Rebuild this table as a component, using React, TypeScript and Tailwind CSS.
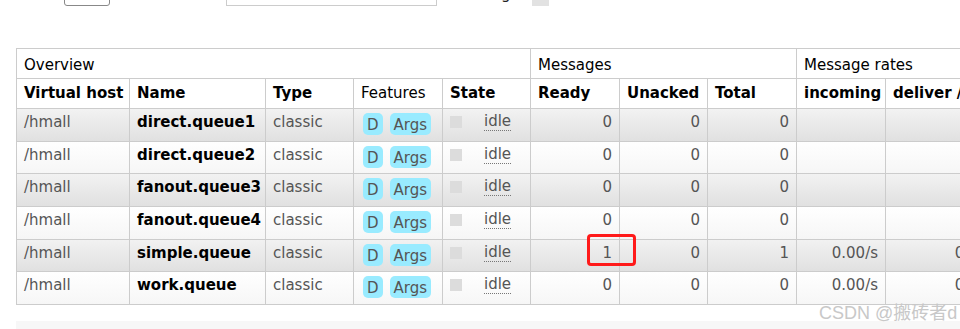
import React from 'react';

type Queue = {
  vhost: string;
  name: string;
  ready: number;
  unacked: number;
  total: number;
  incoming?: string;
  deliver?: string;
};

const queues: Queue[] = [
  { vhost: '/hmall', name: 'direct.queue1', ready: 0, unacked: 0, total: 0 },
  { vhost: '/hmall', name: 'direct.queue2', ready: 0, unacked: 0, total: 0 },
  { vhost: '/hmall', name: 'fanout.queue3', ready: 0, unacked: 0, total: 0 },
  { vhost: '/hmall', name: 'fanout.queue4', ready: 0, unacked: 0, total: 0 },
  { vhost: '/hmall', name: 'simple.queue', ready: 1, unacked: 0, total: 1, incoming: '0.00/s', deliver: '0.00/s' },
  { vhost: '/hmall', name: 'work.queue', ready: 0, unacked: 0, total: 0, incoming: '0.00/s', deliver: '0.00/s' },
];

const colWidths = [113, 136, 88, 89, 88, 89, 88, 89, 89, 123, 90];

// fragments of the pagination/filter bar, cut off by the top edge
const TopBar = () => (
  <div className="h-[6px] overflow-hidden flex items-end text-[15px] text-[#222]">
    <div className="ml-[64px] w-[46px] h-[24px] border border-[#888] rounded-[3px] bg-white shrink-0" />
    <div className="ml-[116px] w-[211px] h-[24px] border border-[#ccc] bg-white shrink-0" />
    <div className="ml-[45px] leading-[18px] mb-[3px] shrink-0">Regex</div>
    <div className="ml-[4px] w-[17px] h-[20px] bg-[#e2e2e2] shrink-0" />
  </div>
);

const Badge = ({ children }: { children: React.ReactNode }) => (
  <span className="inline-block bg-[#99ebff] text-[#555] rounded-[5px] px-[4px] pt-[3px] pb-[1px] leading-[18px]">
    {children}
  </span>
);

export default function App() {
  const th = 'border border-[#ccc] text-left font-bold text-black px-[7px] h-[30px] align-middle whitespace-nowrap overflow-hidden';
  const group = th + ' font-normal text-[#222] pt-[3px]';
  const td = 'border border-[#ccc] px-[7px] pt-[4px] pb-[5.67px] align-top leading-[18px] text-[#555] whitespace-nowrap';
  const num = td + ' text-right';

  return (
    <div className="relative w-[960px] h-[329px] overflow-hidden bg-white font-['DejaVu_Sans',Verdana,sans-serif] text-[15px]">
      <TopBar />

      <div className="mt-[42px] ml-[16px]">
        <table className="table-fixed border-collapse w-[1082px]">
          <colgroup>
            {colWidths.map((w, i) => (
              <col key={i} style={{ width: w }} />
            ))}
          </colgroup>
          <thead>
            <tr>
              <th colSpan={5} className={group}>Overview</th>
              <th colSpan={3} className={group}>Messages</th>
              <th colSpan={3} className={group}>Message rates</th>
            </tr>
            <tr>
              <th className={th}>Virtual host</th>
              <th className={th}>Name</th>
              <th className={th}>Type</th>
              <th className={th + ' font-normal text-[#222]'}>Features</th>
              <th className={th}>State</th>
              <th className={th}>Ready</th>
              <th className={th}>Unacked</th>
              <th className={th}>Total</th>
              <th className={th}>incoming</th>
              <th className={th}>deliver / get</th>
              <th className={th}>ack</th>
            </tr>
          </thead>
          <tbody>
            {queues.map((q, i) => {
              const rowBg =
                i % 2 === 0
                  ? 'bg-gradient-to-b from-[#f2f2f2] to-[#e0e0e0]'
                  : 'bg-gradient-to-b from-[#ffffff] to-[#f6f6f6]';
              return (
                <tr key={q.name} className={rowBg}>
                  <td className={td}>{q.vhost}</td>
                  <td className={td + ' font-bold text-black'}>{q.name}</td>
                  <td className={td}>classic</td>
                  <td className={td + ' pl-[9px] pt-[2px]'}>
                    <div className="flex gap-[7px]">
                      <Badge>D</Badge>
                      <Badge>Args</Badge>
                    </div>
                  </td>
                  <td className={td}>
                    <div className="flex items-start">
                      <span className="mt-[3px] w-[12px] h-[12px] bg-[#dcdcdc] shrink-0" />
                      <span className="ml-[22px] border-b border-dotted border-[#777] leading-[17px]">idle</span>
                    </div>
                  </td>
                  <td className={num}>{q.ready}</td>
                  <td className={num}>{q.unacked}</td>
                  <td className={num}>{q.total}</td>
                  <td className={num}>{q.incoming ?? ''}</td>
                  <td className={num}>{q.deliver ?? ''}</td>
                  <td className={num} />
                </tr>
              );
            })}
          </tbody>
        </table>
      </div>

      <div className="mt-[16px] ml-[16px] h-[12px] bg-[#f7f7f7]" />

      {/* highlight drawn over the Ready cell of simple.queue */}
      <div className="absolute left-[587px] top-[234px] w-[49px] h-[32px] border-[3px] border-[#ff1a1a] rounded-[4px]" />

      <div className="absolute left-[819px] top-[300px] whitespace-nowrap text-[18px] text-[#c8c8c8] font-['Liberation_Sans','Noto_Sans_CJK_SC',sans-serif]">
        CSDN @搬砖者d
      </div>
    </div>
  );
}
